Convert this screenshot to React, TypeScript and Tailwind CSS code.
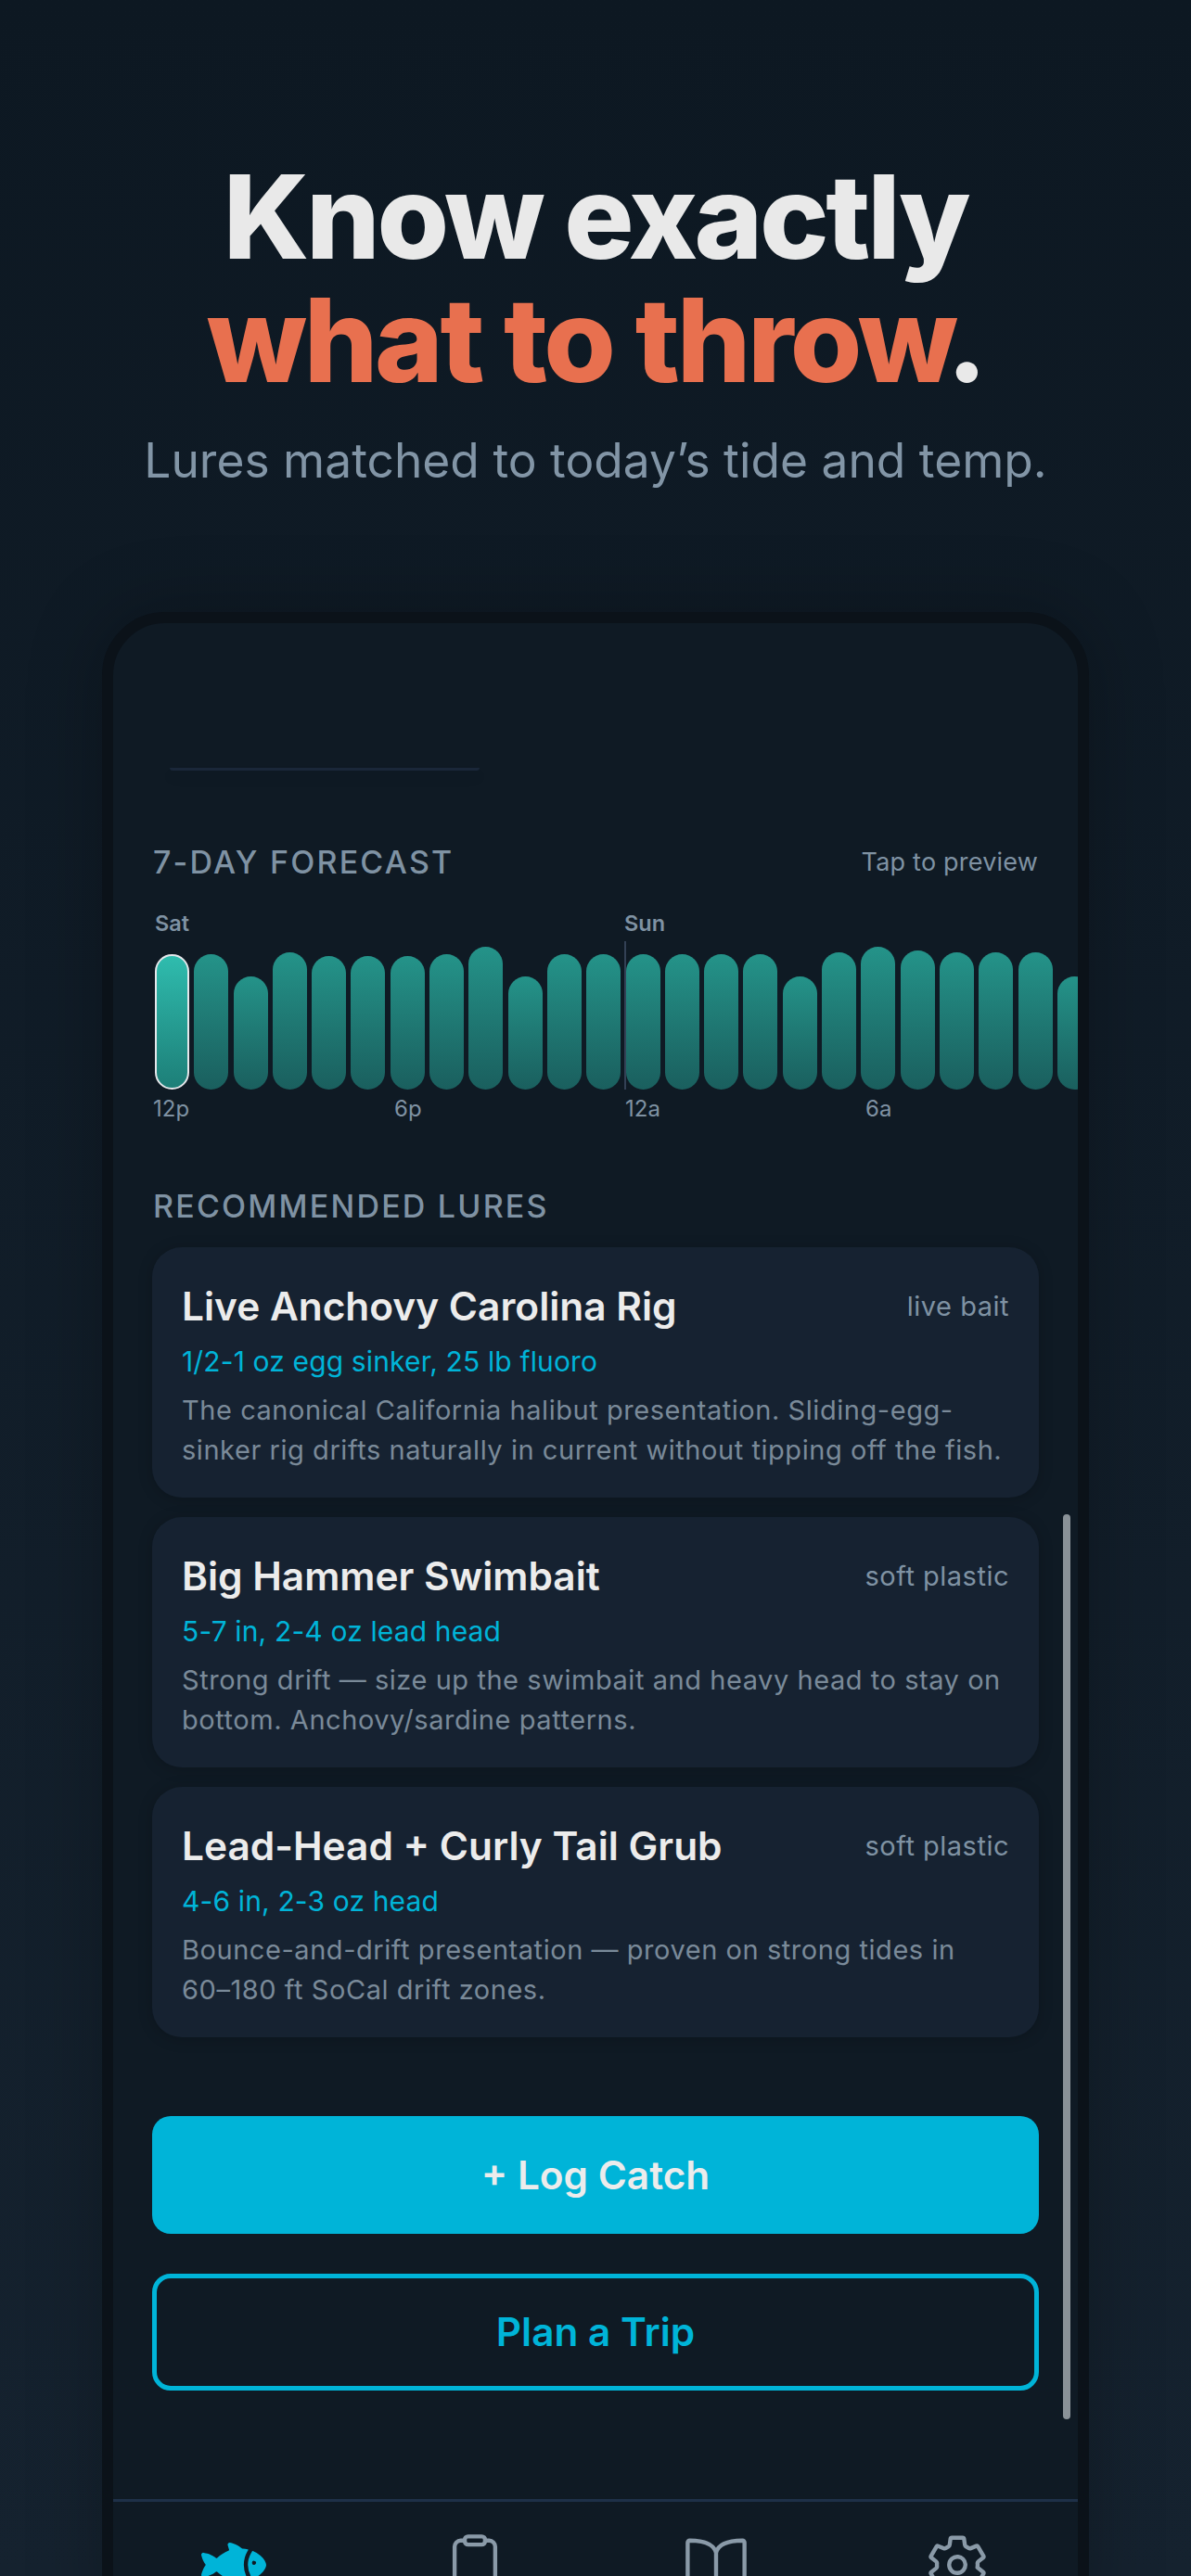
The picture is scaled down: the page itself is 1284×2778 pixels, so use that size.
import { IoFish, IoClipboardOutline, IoBookOutline, IoSettingsOutline } from 'react-icons/io5';

const bars = [146, 146, 122, 148, 144, 144, 144, 146, 154, 122, 146, 146, 146, 146, 146, 146, 122, 148, 154, 150, 148, 148, 148, 122];

const lures = [
  {
    name: 'Live Anchovy Carolina Rig',
    kind: 'live bait',
    spec: '1/2-1 oz egg sinker, 25 lb fluoro',
    text: 'The canonical California halibut presentation. Sliding-egg-sinker rig drifts naturally in current without tipping off the fish.',
  },
  {
    name: 'Big Hammer Swimbait',
    kind: 'soft plastic',
    spec: '5-7 in, 2-4 oz lead head',
    text: 'Strong drift — size up the swimbait and heavy head to stay on bottom. Anchovy/sardine patterns.',
  },
  {
    name: 'Lead-Head + Curly Tail Grub',
    kind: 'soft plastic',
    spec: '4-6 in, 2-3 oz head',
    text: 'Bounce-and-drift presentation — proven on strong tides in 60–180 ft SoCal drift zones.',
  },
];

const hours = [
  { label: '12p', className: 'w-[260px]' },
  { label: '6p', className: 'w-[249px]' },
  { label: '12a', className: 'w-[259px]' },
  { label: '6a', className: '' },
];

const App = () => {
  return (
    <div className="h-[2778px] overflow-hidden bg-gradient-to-b from-[#0d1822] to-[#15222f] font-['Inter',sans-serif]">
      <header className="pt-[167px] text-center">
        <h1 className="text-[125.5px] leading-[133px] font-extrabold tracking-[-3.4px] text-[#e9e9e9]">
          Know exactly
          <br />
          <span className="text-[#e8704f]">what to throw</span>.
        </h1>
        <p className="mt-[31px] text-[51.5px] leading-[64px] text-[#8295a6]">Lures matched to today’s tide and temp.</p>
      </header>

      <div className="relative mx-auto mt-[132px] h-[2200px] w-[1064px] rounded-[68px] border-[12px] border-[#0b1219] bg-[#0f1a24] shadow-[0_0_80px_rgba(0,0,0,0.25)]">
        <div className="ml-[61px] pt-[156px]">
          <div className="h-[3px] w-[334px] rounded-b-full bg-[#1a2739] shadow-[0_8px_12px_rgba(0,0,0,0.1)]" />
        </div>

        <div className="mt-[78px] flex items-center justify-between px-[43px]">
          <h2 className="text-[34px] leading-[41px] font-medium tracking-[2.2px] text-[#7f92a3]">7-DAY FORECAST</h2>
          <span className="text-[27px] leading-[41px] tracking-[0.2px] text-[#7f92a3]">Tap to preview</span>
        </div>

        <div className="mt-[32px] overflow-hidden pl-[45px]">
          <div className="flex h-[28px] text-[23.5px] leading-[28px] font-semibold text-[#7f92a3]">
            <span className="w-[506px]">Sat</span>
            <span>Sun</span>
          </div>
          <div className="relative mt-[5px] flex h-[160px] items-end gap-[5.3px]">
            {bars.map((h, i) => (
              <div
                key={i}
                style={{ height: h }}
                className={
                  i === 0
                    ? 'w-[37px] shrink-0 rounded-full border-[2px] border-[#e5e7eb] bg-gradient-to-b from-[#2fbcae] to-[#1d7f78]'
                    : 'w-[37px] shrink-0 rounded-full bg-gradient-to-b from-[#249389] to-[#1a5f5e]'
                }
              />
            ))}
            <div className="absolute top-0 left-[506px] h-[160px] w-[2px] bg-[#334155]" />
          </div>
          <div className="mt-[6px] -ml-[2px] flex text-[24px] leading-[30px] text-[#7f92a3]">
            {hours.map((hour) => (
              <span key={hour.label} className={hour.className}>
                {hour.label}
              </span>
            ))}
          </div>
        </div>

        <h2 className="mt-[69px] px-[43px] text-[34px] leading-[41px] font-medium tracking-[2.2px] text-[#7f92a3]">
          RECOMMENDED LURES
        </h2>

        <div className="mt-[24px] flex flex-col gap-[21px] px-[42px]">
          {lures.map((lure) => (
            <div
              key={lure.name}
              className="h-[270px] rounded-[32px] bg-[#162231] px-[32px] pt-[38px] shadow-[0_2px_16px_rgba(0,0,0,0.2)]"
            >
              <div className="flex items-center justify-between">
                <h3 className="text-[42.4px] leading-[52px] font-semibold text-[#ececec]">{lure.name}</h3>
                <span className="text-[29px] leading-[36px] tracking-[0.5px] text-[#7f92a3]">{lure.kind}</span>
              </div>
              <p className="mt-[14px] text-[30px] leading-[38px] tracking-[0.14px] text-[#00b4d8]">{lure.spec}</p>
              <p className="mt-[12px] text-[29px] leading-[43px] tracking-[0.55px] text-[#7a8a99]">{lure.text}</p>
            </div>
          ))}
        </div>

        <div className="mt-[85px] flex flex-col gap-[43px] px-[42px]">
          <button type="button" className="h-[127px] rounded-[20px] bg-[#00b4d8] text-[42.3px] font-semibold text-[#ececec]">
            + Log Catch
          </button>
          <button
            type="button"
            className="h-[126px] rounded-[20px] border-[5px] border-[#00b4d8] text-[42.3px] font-semibold text-[#00b4d8]"
          >
            Plan a Trip
          </button>
        </div>

        <nav className="mt-[117px] flex h-[200px] border-t-[3px] border-[#1e3048] pt-[33px] text-[#8a9aa8]">
          <div className="flex w-[260px] justify-center">
            <IoFish className="h-[70px] w-[70px] text-[#00b4d8]" />
          </div>
          <div className="flex w-[260px] justify-center">
            <IoClipboardOutline className="h-[70px] w-[70px]" />
          </div>
          <div className="flex w-[260px] justify-center">
            <IoBookOutline className="h-[70px] w-[70px]" />
          </div>
          <div className="flex w-[260px] justify-center">
            <IoSettingsOutline className="h-[70px] w-[70px]" />
          </div>
        </nav>

        <div className="absolute top-[961px] right-[8px] h-[976px] w-[8px] rounded-full bg-[#8a9298]" />
      </div>
    </div>
  );
};

export default App;
